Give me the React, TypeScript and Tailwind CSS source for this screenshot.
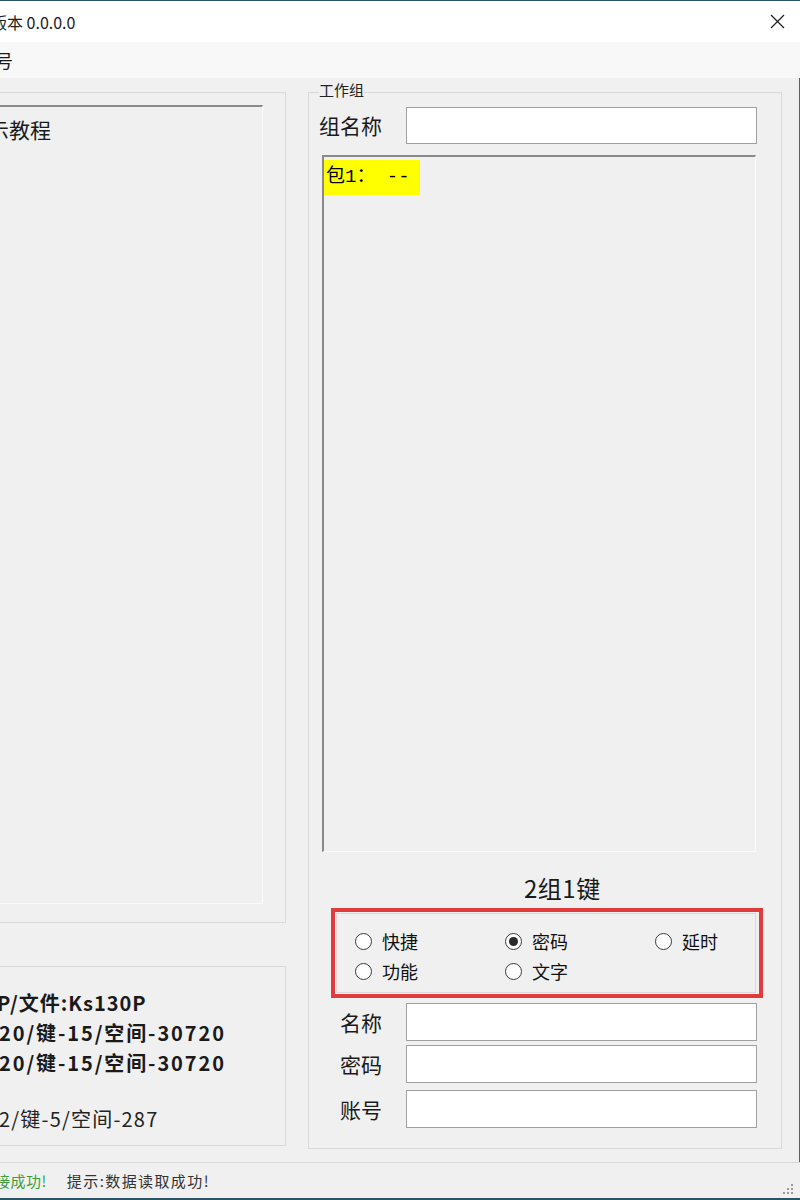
import { useState } from 'react';

const modes = [
  { id: 'shortcut', label: '快捷' },
  { id: 'password', label: '密码' },
  { id: 'delay', label: '延时' },
  { id: 'function', label: '功能' },
  { id: 'text', label: '文字' },
];

interface RadioProps {
  label: string;
  checked: boolean;
  onSelect: () => void;
}

function Radio({ label, checked, onSelect }: RadioProps) {
  return (
    <div className="flex h-[30px] items-center gap-[10px]" onClick={onSelect}>
      <span className="flex h-[17px] w-[17px] items-center justify-center rounded-full border border-[#3a3a3a] bg-white">
        {checked && <span className="h-[9px] w-[9px] rounded-full bg-[#2a2a2a]" />}
      </span>
      <span className="text-[18px] leading-none text-[#111]">{label}</span>
    </div>
  );
}

interface FieldProps {
  label: string;
  className?: string;
}

function Field({ label, className = '' }: FieldProps) {
  return (
    <div className={`flex items-center ${className}`}>
      <span className="w-[66px] pl-[21px] text-[21px] leading-none text-[#1a1a1a]">{label}</span>
      <input
        type="text"
        className="ml-[21px] h-[38px] w-[351px] border border-[#a0a0a0] bg-white outline-none"
      />
    </div>
  );
}

export default function App() {
  const [mode, setMode] = useState('password');

  return (
    <div className="flex h-[1200px] w-[800px] flex-col overflow-hidden bg-[#f0f0f0] font-['Noto_Sans_CJK_SC',sans-serif] text-[#1a1a1a]">
      {/* title bar */}
      <div className="flex h-[42px] shrink-0 items-center justify-between border-t border-[#2b5566] bg-white">
        <span className="ml-[-9px] text-[16px] leading-none text-[#222]">版本 0.0.0.0</span>
        <svg width="15" height="15" viewBox="0 0 15 15" className="mr-[15px]">
          <path d="M1 1 L14 14 M14 1 L1 14" stroke="#222" strokeWidth="1.3" />
        </svg>
      </div>

      {/* menu */}
      <div className="flex h-[36px] shrink-0 items-center bg-[#f8f8f8]">
        <span className="ml-[-5px] text-[18px] leading-none">号</span>
      </div>

      <div className="flex min-h-0 flex-1 border-r border-[#4a6470]">
        {/* left column */}
        <div className="flex w-[286px] shrink-0 flex-col pt-[14px]">
          <div className="flex h-[831px] flex-col border-y border-r border-[#d9d9d9] pt-[12px] pr-[22px] pb-[18px]">
            <div className="flex-1 border-t-2 border-r border-b border-t-[#8a8a8a] border-r-[#fafafa] border-b-[#fafafa] pt-[8px]">
              <div className="ml-[-33px] text-[21px] leading-[28px]">演示教程</div>
            </div>
          </div>

          <div className="mt-[43px] flex h-[180px] flex-col border-y border-r border-[#d9d9d9] pt-[21px]">
            <div className="ml-[-3px] text-[20px] leading-[30px] font-bold tracking-[1px]">P/文件:Ks130P</div>
            <div className="ml-[-1px] text-[20px] leading-[30px] font-bold tracking-[1.9px]">20/键-15/空间-30720</div>
            <div className="ml-[-1px] text-[20px] leading-[30px] font-bold tracking-[1.9px]">20/键-15/空间-30720</div>
            <div className="mt-[26px] ml-[-1px] text-[20px] leading-[30px] tracking-[1.2px] text-[#222]">2/键-5/空间-287</div>
          </div>
        </div>

        {/* work group */}
        <div className="ml-[22px] pt-[2px]">
          <fieldset className="flex h-[1069px] w-[474px] flex-col border border-[#d9d9d9] px-[10px]">
            <legend className="px-0 pb-[4px] text-[15px] leading-[20px] text-[#222]">工作组</legend>

            <div className="mt-[3px] flex items-center">
              <span className="w-[87px] text-[21px] leading-none">组名称</span>
              <input
                type="text"
                className="h-[37px] w-[351px] border border-[#a0a0a0] bg-white outline-none"
              />
            </div>

            <div className="mt-[11px] ml-[3px] h-[697px] w-[434px] border-t-2 border-l-2 border-r border-b border-t-[#8a8a8a] border-l-[#8a8a8a] border-r-[#fafafa] border-b-[#fafafa] pt-[3px]">
              <div className="flex h-[35px] w-[96px] items-center bg-[#ffff00] pl-[2px] font-['Liberation_Mono','Noto_Sans_CJK_SC',monospace] text-[19px] leading-none whitespace-pre text-black">
                包1： --
              </div>
            </div>

            <div className="mt-[21px] ml-[205px] text-[24px] leading-[30px] tracking-[0.5px]">2组1键</div>

            {/* key type */}
            <div className="mt-[5px] ml-[12px] h-[90px] w-[432px] border-4 border-[#e23b3b] pt-[1px] pr-[3px] pb-[1px] pl-[1px]">
              <div className="h-full border border-[#d9d9d9] pt-[12px] pl-[18px]">
                <div className="grid grid-cols-[150px_150px_1fr]">
                  {modes.map((m) => (
                    <Radio
                      key={m.id}
                      label={m.label}
                      checked={mode === m.id}
                      onSelect={() => setMode(m.id)}
                    />
                  ))}
                </div>
              </div>
            </div>

            <Field label="名称" className="mt-[5px]" />
            <Field label="密码" className="mt-[4px]" />
            <Field label="账号" className="mt-[7px]" />
          </fieldset>
        </div>
      </div>

      {/* status bar */}
      <div className="relative flex h-[38px] shrink-0 items-center border-t border-b-2 border-t-[#dadada] border-b-[#2b5566] text-[15px] leading-none">
        <span className="ml-[-5px] tracking-[0.5px] text-[#3c9e3c]">接成功!</span>
        <span className="ml-[20px] tracking-[1.4px] text-[#333]">提示:数据读取成功!</span>
        <svg width="12" height="12" viewBox="0 0 12 12" className="absolute right-[6px] bottom-[3px]">
          <g fill="#9a9a9a">
            <rect x="9" y="1" width="2" height="2" />
            <rect x="5" y="5" width="2" height="2" />
            <rect x="9" y="5" width="2" height="2" />
            <rect x="1" y="9" width="2" height="2" />
            <rect x="5" y="9" width="2" height="2" />
            <rect x="9" y="9" width="2" height="2" />
          </g>
        </svg>
      </div>
    </div>
  );
}
